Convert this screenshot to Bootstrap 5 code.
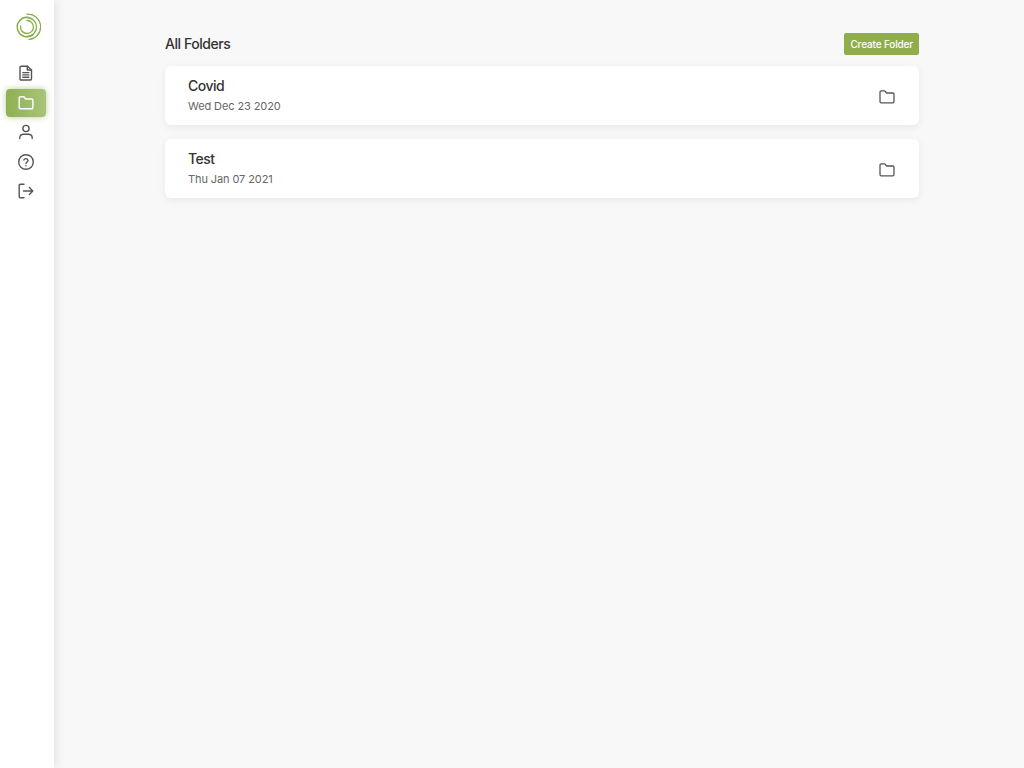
<!DOCTYPE html>
<html lang="en">
<head>
<meta charset="utf-8">
<title>All Folders</title>
<link rel="stylesheet" href="https://cdn.jsdelivr.net/npm/bootstrap@5.3.0/dist/css/bootstrap.min.css">
<style>
html,body{height:100%}
body{background:#f8f8f8;font-family:Inter,"Liberation Sans",sans-serif;color:#333;overflow:hidden}
.rail{width:54px;height:768px;background:#fff;box-shadow:2px 0 10px rgba(0,0,0,.09);flex:none;padding:12px 2px 0 0}
.rail-logo{width:28px;height:30px;display:block;margin-left:2px}
.rail-list{margin-top:17px;gap:1px}
.rail-item{width:40px;height:28.5px;border-radius:4px;color:#555}
.rail-item.on{background:linear-gradient(90deg,#8fb052,#a9c47a);color:#fff;box-shadow:0 0 6px rgba(143,176,82,.6)}
.rail-item svg{width:18px;height:18px;fill:none;stroke:currentColor;stroke-width:1.4;stroke-linecap:round;stroke-linejoin:round}
.sheet{width:754px;margin-left:111px;padding-top:32px}
.sheet-title{font-size:14px;font-weight:500;line-height:22px;margin:1px 0 0;letter-spacing:-.45px;color:#333}
.make-btn{background:#8fae4b;color:#fff;font-size:10px;font-weight:500;padding:0 6px;height:22px;line-height:22px;border-radius:2px;border:0;letter-spacing:-.15px}
.make-btn:hover{background:#8fae4b;color:#fff}
.folder-card{height:59px;border:0;border-radius:6px;box-shadow:0 2px 8px rgba(0,0,0,.07);margin-top:14px;padding:0 23px 0 23px}
.head-row + .folder-card{margin-top:11px}
.folder-text{margin-top:-2px}
.folder-name{font-size:14px;font-weight:500;line-height:20px;color:#333;letter-spacing:-.5px}
.folder-date{font-size:11px;line-height:16px;color:#666;margin-top:2px;letter-spacing:-.1px}
.folder-ico{width:18px;height:18px;fill:none;stroke:#555;stroke-width:1.3;stroke-linejoin:round;margin-top:2px}
</style>
</head>
<body>
<div class="d-flex">
  <nav class="rail d-flex flex-column align-items-center">
    <svg class="rail-logo" viewBox="0 0 28 30" fill="none" stroke="#86ad45" stroke-linecap="round">
      <path stroke-width="1.3" d="M14 2.2A12.6 12.6 0 0 1 16 27.4"/>
      <path stroke-width="1.3" d="M14 5.5A9.5 9.5 0 0 1 14 24.5"/>
      <path stroke-width="1.5" d="M15.5 5.4A9.7 9.7 0 1 0 20 22.6"/>
      <path stroke-width="1.3" d="M14 8.5A6.5 6.5 0 0 1 20.5 15 6.5 6.5 0 0 1 14 21.5 6.5 6.5 0 0 1 7.6 14"/>
    </svg>
    <div class="rail-list d-flex flex-column align-items-center">
      <a class="rail-item d-flex align-items-center justify-content-center">
        <svg viewBox="0 0 18 18"><path d="M4 2.2h6.5L14.5 6v9a1 1 0 0 1-1 1H4a1 1 0 0 1-1-1V3.2a1 1 0 0 1 1-1z"/><path d="M10.3 2.2V6h4.2M5.8 8.6h6M5.8 10.9h6M5.8 13.2h6"/></svg>
      </a>
      <a class="rail-item on d-flex align-items-center justify-content-center">
        <svg viewBox="0 0 18 18"><path d="M2.2 4a1.2 1.2 0 0 1 1.2-1.2h3.5l1.8 2.2h6a1.2 1.2 0 0 1 1.2 1.2v7.4a1.2 1.2 0 0 1-1.2 1.2H3.4a1.2 1.2 0 0 1-1.2-1.2z"/></svg>
      </a>
      <a class="rail-item d-flex align-items-center justify-content-center">
        <svg viewBox="0 0 18 18"><circle cx="9" cy="5.5" r="3.1"/><path d="M2.8 15.5v-1a3.6 3.6 0 0 1 3.6-3.3h5.2a3.6 3.6 0 0 1 3.6 3.3v1"/></svg>
      </a>
      <a class="rail-item d-flex align-items-center justify-content-center">
        <svg viewBox="0 0 18 18"><circle cx="9" cy="9" r="7.3"/><path d="M6.9 7a2.2 2.2 0 0 1 4.2.5c0 1.4-2.1 1.7-2.1 3"/><path d="M9 12.8v.1"/></svg>
      </a>
      <a class="rail-item d-flex align-items-center justify-content-center">
        <svg viewBox="0 0 18 18"><path d="M7 2.2H3.2a1 1 0 0 0-1 1v11.6a1 1 0 0 0 1 1H7"/><path d="M6.5 9h9.3M12.4 5.6 15.8 9l-3.4 3.4"/></svg>
      </a>
    </div>
  </nav>
  <main class="sheet">
    <div class="head-row d-flex justify-content-between align-items-center">
      <h1 class="sheet-title">All Folders</h1>
      <button class="btn make-btn" type="button">Create Folder</button>
    </div>
    <div class="card folder-card flex-row align-items-center justify-content-between">
      <div class="folder-text">
        <div class="folder-name">Covid</div>
        <div class="folder-date">Wed Dec 23 2020</div>
      </div>
      <svg class="folder-ico" viewBox="0 0 18 18"><path d="M2 4a1.2 1.2 0 0 1 1.2-1.2h3.6l1.8 2.2h6.2a1.2 1.2 0 0 1 1.2 1.2v7.4a1.2 1.2 0 0 1-1.2 1.2H3.2A1.2 1.2 0 0 1 2 13.6z"/></svg>
    </div>
    <div class="card folder-card flex-row align-items-center justify-content-between">
      <div class="folder-text">
        <div class="folder-name">Test</div>
        <div class="folder-date">Thu Jan 07 2021</div>
      </div>
      <svg class="folder-ico" viewBox="0 0 18 18"><path d="M2 4a1.2 1.2 0 0 1 1.2-1.2h3.6l1.8 2.2h6.2a1.2 1.2 0 0 1 1.2 1.2v7.4a1.2 1.2 0 0 1-1.2 1.2H3.2A1.2 1.2 0 0 1 2 13.6z"/></svg>
    </div>
  </main>
</div>
<script src="https://cdn.jsdelivr.net/npm/bootstrap@5.3.0/dist/js/bootstrap.bundle.min.js"></script>
</body>
</html>
